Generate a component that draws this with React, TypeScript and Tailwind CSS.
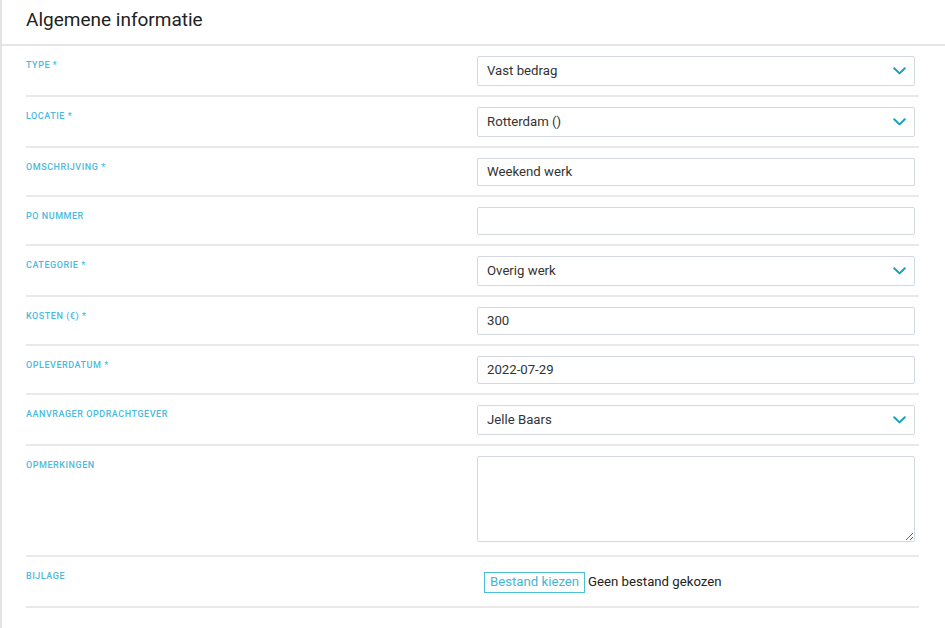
import React from "react";

const rows: { label: string; kind: "select" | "input" | "textarea" | "file"; value?: string }[] = [
  { label: "Type *", kind: "select", value: "Vast bedrag" },
  { label: "Locatie *", kind: "select", value: "Rotterdam ()" },
  { label: "Omschrijving *", kind: "input", value: "Weekend werk" },
  { label: "PO nummer", kind: "input", value: "" },
  { label: "Categorie *", kind: "select", value: "Overig werk" },
  { label: "Kosten (€) *", kind: "input", value: "300" },
  { label: "Opleverdatum *", kind: "input", value: "2022-07-29" },
  { label: "Aanvrager opdrachtgever", kind: "select", value: "Jelle Baars" },
  { label: "Opmerkingen", kind: "textarea" },
  { label: "Bijlage", kind: "file" },
];

export default function App() {
  return (
    <div
      className="h-[628px] w-[945px] overflow-hidden border-l-2 border-[#e3e3e3] bg-white"
      style={{ fontFamily: "Roboto, 'Liberation Sans', sans-serif" }}
    >
      {/* Header */}
      <div className="flex h-[46px] items-center border-b-2 border-[#e6e6e6] pl-[24px] pb-[3px]">
        <h2 className="text-[19px] font-normal text-[#222]">Algemene informatie</h2>
      </div>

      <div className="ml-[24px] w-[893px]">
        {rows.map((row, i) => (
          <FieldRow key={i} {...row} />
        ))}
      </div>
    </div>
  );
}

function FieldRow({ label, kind, value }: { label: string; kind: string; value?: string }) {
  return (
    <div className="flex border-b-2 border-[#e9e9e9] pt-[10px] pb-[9px]">
      <div className="w-[451px] pt-[3px]">
        <span className="block text-[9px] font-medium uppercase leading-[12px] tracking-[0.06em] text-[#4bbadc]">
          {label}
        </span>
      </div>
      <div className="w-[438px]">
        {kind === "select" && (
          <div className="flex h-[30px] items-center justify-between rounded-[2px] border border-[#d3d9de] pl-[9px] pr-[10px]">
            <span className="text-[13.2px] text-[#333]">{value}</span>
            <svg width="13" height="8" viewBox="0 0 13 8" className="mr-[-2px]">
              <path d="M1.2 1.2L6.5 6.4L11.8 1.2" stroke="#1a9fb7" strokeWidth="2" fill="none" strokeLinecap="round" strokeLinejoin="round" />
            </svg>
          </div>
        )}
        {kind === "input" && (
          <div className="flex h-[28px] items-center rounded-[2px] border border-[#d3d9de] px-[9px]">
            <span className="text-[13.2px] text-[#333]">{value}</span>
          </div>
        )}
        {kind === "textarea" && (
          <textarea className="mb-[4px] block h-[86px] w-full resize-y rounded-[2px] border border-[#d3d9de] px-[9px] py-[6px] text-[13px] outline-none" />
        )}
        {kind === "file" && (
          <div className="flex h-[30px] items-center pl-[7px]">
            <span className="flex h-[21px] items-center border border-[#4cbfd8] px-[5px] text-[13.2px] text-[#45b6d2]">
              Bestand kiezen
            </span>
            <span className="ml-[3px] text-[13.2px] text-[#222]">Geen bestand gekozen</span>
          </div>
        )}
      </div>
    </div>
  );
}
